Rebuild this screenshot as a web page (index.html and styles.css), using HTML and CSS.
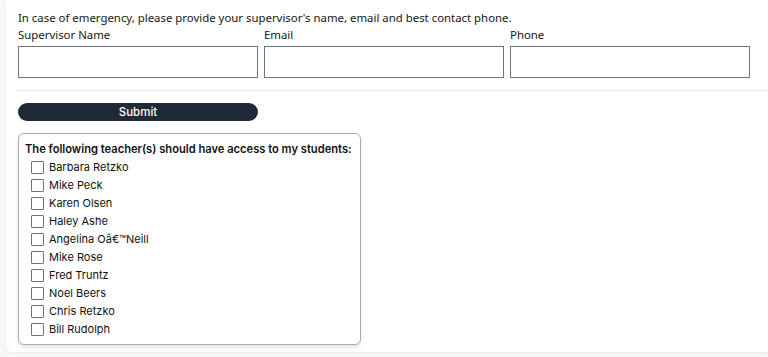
FILE: index.html
```html
<!DOCTYPE html>
<html lang="en">
<head>
<meta charset="utf-8">
<title>Emergency contact</title>
<link rel="stylesheet" href="styles.css">
</head>
<body>
<main class="panel">
  <p class="intro">In case of emergency, please provide your supervisor's name, email and best contact phone.</p>
  <div class="fields">
    <label class="field"><span class="field-label">Supervisor Name</span><input type="text" class="input"></label>
    <label class="field"><span class="field-label">Email</span><input type="text" class="input"></label>
    <label class="field"><span class="field-label">Phone</span><input type="text" class="input"></label>
  </div>
  <hr class="divider">
  <button type="button" class="submit">Submit</button>
  <fieldset class="teachers">
    <legend class="teachers-title">The following teacher(s) should have access to my students:</legend>
    <label class="teacher"><span class="box"></span>Barbara Retzko</label>
    <label class="teacher"><span class="box"></span>Mike Peck</label>
    <label class="teacher"><span class="box"></span>Karen Olsen</label>
    <label class="teacher"><span class="box"></span>Haley Ashe</label>
    <label class="teacher"><span class="box"></span>Angelina Oâ€™Neill</label>
    <label class="teacher"><span class="box"></span>Mike Rose</label>
    <label class="teacher"><span class="box"></span>Fred Truntz</label>
    <label class="teacher"><span class="box"></span>Noel Beers</label>
    <label class="teacher"><span class="box"></span>Chris Retzko</label>
    <label class="teacher"><span class="box"></span>Bill Rudolph</label>
  </fieldset>
</main>
</body>
</html>
```
FILE: styles.css
```css
html, body {
  margin: 0;
  padding: 0;
  background: #f7f7f7;
}
body {
  padding-left: 6px;
  height: 357px;
  overflow: hidden;
  font-family: "Noto Sans", "Open Sans", sans-serif;
  color: #161616;
}
.panel {
  background: #fff;
  border-radius: 0 0 0 6px;
  box-shadow: 0 1px 3px rgba(0,0,0,0.05);
  padding: 11px 0 7px 12px;
  height: 334px;
}
.intro {
  margin: 0;
  font-size: 11.4px;
  line-height: 14px;
}
.fields {
  display: flex;
  gap: 6px;
  margin-top: 3px;
}
.field {
  display: flex;
  flex-direction: column;
  width: 240px;
}
.field-label {
  font-size: 11.4px;
  line-height: 14px;
  margin-bottom: 4px;
}
.input {
  box-sizing: border-box;
  width: 240px;
  height: 32px;
  margin: 0;
  border: 1px solid #6b7280;
  border-radius: 0;
  background: #fff;
}
.divider {
  border: 0;
  border-top: 1px solid #e6e6e6;
  margin: 12px 0 12px;
}
.submit {
  display: block;
  width: 240px;
  height: 18px;
  border: 0;
  border-radius: 9px;
  background: #1f2937;
  color: #fff;
  font-family: "Inter", sans-serif;
  font-size: 11.5px;
  font-weight: 500;
  line-height: 18px;
  padding: 0;
}
.teachers {
  box-sizing: border-box;
  width: 343px;
  margin: 12px 0 0;
  padding: 7px 6px 6px 6px;
  border: 1px solid #a5a8ba;
  border-radius: 6px;
  box-shadow: 0 3px 5px rgba(0,0,0,0.1);
  font-family: "Inter", sans-serif;
  font-size: 11px;
  color: #111;
  display: flex;
  flex-direction: column;
}
.teachers-title {
  float: left;
  padding: 0;
  font-size: 11.15px;
  font-weight: 600;
  white-space: nowrap;
  line-height: 16px;
  margin-bottom: 1px;
}
.teacher {
  display: flex;
  align-items: center;
  height: 18px;
  padding-left: 6px;
}
.box {
  box-sizing: border-box;
  width: 13px;
  height: 13px;
  border: 1px solid #6b7280;
  border-radius: 1px;
  margin-right: 5px;
  background: #fff;
}
```
